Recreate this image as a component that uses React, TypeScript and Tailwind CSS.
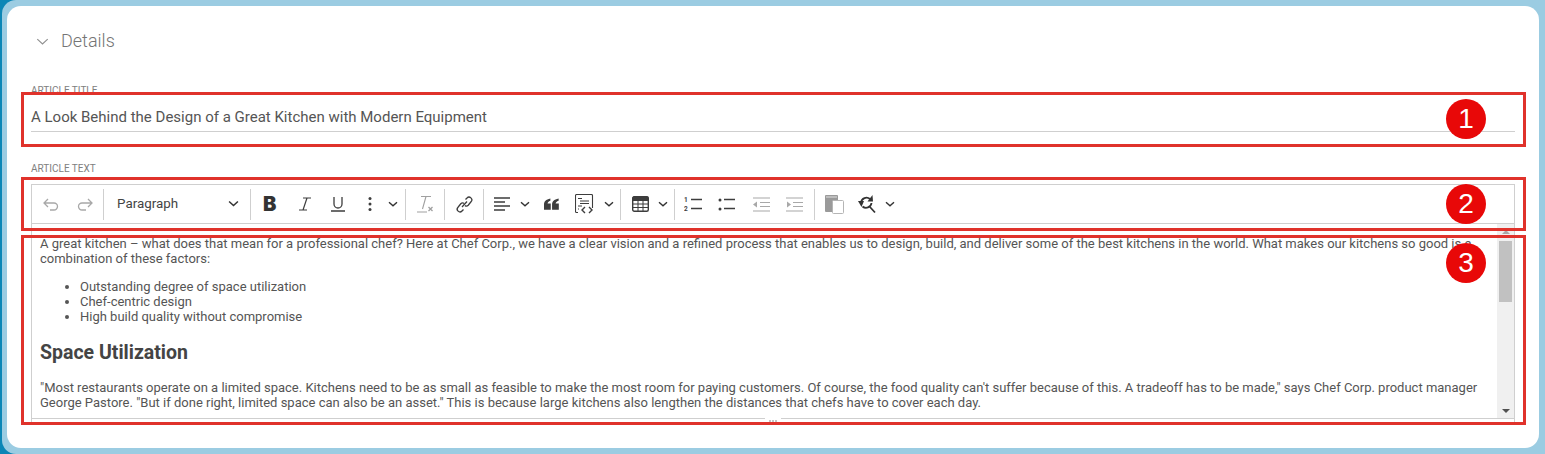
import React from "react";

const C = "#3d3d3d";

function Chev({ w = 10, c = "#333", s = 1.4 }: { w?: number; c?: string; s?: number }) {
  return (
    <svg width={w} height={w} viewBox="0 0 10 10" fill="none" stroke={c} strokeWidth={s}>
      <path d="M1 3.2 5 6.800l4-3.600" />
    </svg>
  );
}
const Sep = () => <div className="w-px h-[31px] bg-[#cfcfcf] shrink-0" />;

function Undo({ flip }: { flip?: boolean }) {
  return (
    <svg width="16" height="13" viewBox="0 0 16 13" fill="none" stroke="#a8a8a8" strokeWidth="1.3" style={flip ? { transform: "scaleX(-1)" } : undefined}>
      <path d="M5 1 1 5l4 4M1 5h10a3.500 3.500 0 0 1 0 7H7" />
    </svg>
  );
}

function Toolbar() {
  return (
    <div className="flex items-center h-[40px] border border-[#cfcfcf] pl-[11px] text-[#444]">
      <div className="flex items-center w-[60px] gap-[18px] shrink-0"><Undo /><Undo flip /></div>
      <Sep />
      <div className="flex items-center justify-between w-[146px] pl-[13px] pr-[11px] text-[13.4px] shrink-0">
        <span>Paragraph</span><Chev w={11} />
      </div>
      <Sep />
      <div className="flex items-center w-[154px] pl-[12px] shrink-0">
        <span className="w-[36px] font-['Inter'] font-black text-[20px] leading-none text-[#333]">B</span>
        <span className="w-[32px] flex">
          <svg width="12" height="14" viewBox="0 0 12 14" stroke={C} strokeWidth="1.2" fill="none"><path d="M4 1h8M0 13h8M8 1 4 13" /></svg>
        </span>
        <span className="w-[36px] flex">
          <svg width="14" height="16" viewBox="0 0 14 16" stroke={C} strokeWidth="1.3" fill="none"><path d="M3 1v7a4 4 0 0 0 8 0V1M0 15h14" /></svg>
        </span>
        <span className="w-[21px] flex">
          <svg width="6" height="16" viewBox="0 0 6 16" fill={C}><circle cx="3" cy="2.500" r="1.500" /><circle cx="3" cy="8" r="1.500" /><circle cx="3" cy="13.500" r="1.500" /></svg>
        </span>
        <Chev />
      </div>
      <Sep />
      <div className="flex items-center justify-center w-[38px] shrink-0">
        <svg width="17" height="18" viewBox="0 0 17 18" fill="none" stroke="#a0a0a0" strokeWidth="1.100"><path d="M0 17h10M4 1.500h10M9 1.500 5.500 14" /><path d="M11.500 12l4 4M15.500 12l-4 4" strokeWidth="1.300" /></svg>
      </div>
      <Sep />
      <div className="flex items-center justify-center w-[38px] shrink-0">
        <svg width="17" height="17" viewBox="0 0 17 17" fill="none" stroke={C} strokeWidth="1.300"><path d="M6 11l5-5.500M9.500 3.500 11 2a2.700 2.700 0 0 1 4 3.800l-2.800 3.400a2.500 2.500 0 0 1-3.200.4M7.500 13.500 6 15a2.700 2.700 0 0 1-4-3.800l2.800-3.400a2.500 2.500 0 0 1 3.200-.4" /></svg>
      </div>
      <Sep />
      <div className="flex items-center w-[136px] pl-[10px] shrink-0">
        <span className="w-[26px] flex">
          <svg width="16" height="16" viewBox="0 0 16 16" stroke={C} strokeWidth="1.300" fill="none"><path d="M0 2h16M0 6h11M0 10h16M0 14h11" /></svg>
        </span>
        <span className="w-[24px] flex"><Chev /></span>
        <span className="w-[31px] flex">
          <svg width="15" height="12" viewBox="0 0 16 12" fill={C}><path d="M0 12V6.500C0 3 2 1 6.800 0v2.400C4.800 3 3.900 4 3.800 5.500h3.400V12zM8.600 12V6.500C8.600 3 10.600 1 15.600 0v2.400c-2.200.6-3 1.600-3.200 3.100h3.400V12z" /></svg>
        </span>
        <span className="w-[29px] flex">
          <svg width="19" height="20" viewBox="0 0 19 20" fill="none" stroke={C} strokeWidth="1.100"><path d="M3 18.500H1.500a1 1 0 0 1-1-1V1.500a1 1 0 0 1 1-1h15a1 1 0 0 1 1 1V14" /><path d="M3 4.500h4M5 7h9M5 9.500h9M3 12h4M3 15h1" strokeWidth="1" /><path d="M10 13l-3 3 3 3M14 13l3 3-3 3" strokeWidth="1.400" /></svg>
        </span>
        <Chev />
      </div>
      <Sep />
      <div className="flex items-center w-[53px] pl-[11px] shrink-0">
        <span className="w-[26px] flex">
          <svg width="17" height="16" viewBox="0 0 17 16" fill="none" stroke={C}><rect x="0.700" y="0.700" width="15.600" height="14.600" rx="1.500" strokeWidth="1.400" /><path d="M1 1h15v3.500H1z" fill={C} /><path d="M1 8h15M1 11.500h15M6 4v11M11 4v11" strokeWidth="1" /></svg>
        </span>
        <Chev />
      </div>
      <Sep />
      <div className="flex items-center w-[139px] pl-[9px] shrink-0">
        <span className="w-[34px] flex">
          <svg width="18" height="17" viewBox="0 0 18 17" fill="none" stroke={C} strokeWidth="1.400">
            <text x="0" y="6" fontSize="6.500" fill={C} stroke="none" fontFamily="Roboto" fontWeight="700">1</text>
            <text x="0" y="15" fontSize="6.500" fill={C} stroke="none" fontFamily="Roboto" fontWeight="700">2</text>
            <path d="M7 3.500h11M7 12.500h11" />
          </svg>
        </span>
        <span className="w-[34px] flex">
          <svg width="18" height="17" viewBox="0 0 18 17" fill={C} stroke={C} strokeWidth="1.400">
            <circle cx="2" cy="4" r="1.500" stroke="none" /><circle cx="2" cy="13" r="1.500" stroke="none" />
            <path d="M6 3.500h11M6 12.500h11" />
          </svg>
        </span>
        <span className="w-[34px] flex">
          <svg width="18" height="17" viewBox="0 0 18 17" fill="#a8a8a8" stroke="#a8a8a8" strokeWidth="1.200">
            <path d="M1 2h17M8 6.500h10M8 10.500h10M1 15h17" /><path d="M5 5.500 1 8.500l4 3z" stroke="none" />
          </svg>
        </span>
        <svg width="18" height="17" viewBox="0 0 18 17" fill="#a8a8a8" stroke="#a8a8a8" strokeWidth="1.200">
          <path d="M0 2h17M7 6.500h10M7 10.500h10M0 15h17" /><path d="M1 5.500l4 3-4 3z" stroke="none" />
        </svg>
      </div>
      <Sep />
      <div className="flex items-center pl-[10px] shrink-0">
        <span className="w-[33px] flex">
          <svg width="19" height="19" viewBox="0 0 19 19"><rect x="0" y="0" width="13" height="17" rx="1" fill="#9a9a9a" /><rect x="1" y="1" width="11" height="2" fill="#bdbdbd" /><rect x="7.500" y="5.500" width="11" height="13" rx="1" fill="#fff" stroke="#b5b5b5" /></svg>
        </span>
        <span className="w-[27px] flex">
          <svg width="20" height="20" viewBox="0 0 20 20" fill="none" stroke="#333" strokeWidth="1.800">
            <path d="M3 8.500a5.500 5.500 0 0 1 9-3.500M13.500 9a5.500 5.500 0 0 1-9 3.500M11.500 12.500 17 18.500" />
            <path d="M9.500 7.500 15 7.500 14.500 1z" fill="#333" stroke="none" /><path d="M0 7h6l-2.500 6z" fill="#333" stroke="none" />
          </svg>
        </span>
        <Chev />
      </div>
    </div>
  );
}

function Editor() {
  return (
    <div className="relative h-[199px] border-x border-b border-[#cfcfcf] text-[13px] leading-[15px] text-[#555]">
      <div className="flex h-[195px] border-b border-[#cfcfcf] overflow-hidden">
        <div className="flex-1 pl-[8px] pr-[19px] pt-[12px]">
          <p>A great kitchen – what does that mean for a professional chef? Here at Chef Corp., we have a clear vision and a refined process that enables us to design, build, and deliver some of the best kitchens in the world. What makes our kitchens so good is a combination of these factors:</p>
          <ul className="list-disc pl-[40px] mt-[13px]">
            <li>Outstanding degree of space utilization</li>
            <li>Chef-centric design</li>
            <li>High build quality without compromise</li>
          </ul>
          <h2 className="text-[19.500px] leading-[22px] font-bold text-[#444] mt-[18px]">Space Utilization</h2>
          <p className="mt-[16px]">"Most restaurants operate on a limited space. Kitchens need to be as small as feasible to make the most room for paying customers. Of course, the food quality can't suffer because of this. A tradeoff has to be made," says Chef Corp. product manager George Pastore. "But if done right, limited space can also be an asset." This is because large kitchens also lengthen the distances that chefs have to cover each day.</p>
        </div>
        <div className="w-[17px] bg-[#f0f0f0] flex flex-col items-center justify-between shrink-0">
          <div className="flex flex-col items-center w-full">
            <div className="mt-[6px] w-0 h-0 border-x-[4px] border-x-transparent border-b-[4px] border-b-[#a8a8a8]" />
            <div className="mt-[7px] w-[13px] h-[61px] bg-[#c1c1c1]" />
          </div>
          <div className="mb-[5px] w-0 h-0 border-x-[4px] border-x-transparent border-t-[4px] border-t-[#505050]" />
        </div>
      </div>
      <div className="absolute left-0 right-0 -bottom-px flex justify-center">
        <div className="w-[16px] h-[5px] bg-white flex items-center justify-center gap-px">
          <i className="w-[2px] h-[2px] bg-[#c4c4c4]" /><i className="w-[2px] h-[2px] bg-[#c4c4c4]" /><i className="w-[2px] h-[2px] bg-[#c4c4c4]" />
        </div>
      </div>
    </div>
  );
}

const Red = ({ cls }: { cls: string }) => <div className={`absolute border-[3px] border-[#e0322b] ${cls}`} />;
const Badge = ({ n, cls }: { n: number; cls: string }) => (
  <div className={`absolute w-[40px] h-[40px] rounded-full bg-[#e80808] text-white flex items-center justify-center font-['Liberation_Sans'] text-[28px] ${cls}`}>{n}</div>
);

export default function App() {
  return (
    <div className="w-[1545px] h-[454px] overflow-hidden bg-[#0b86b6] font-['Roboto',sans-serif]">
      <div className="h-full ml-[2px] bg-[#9bcce2] rounded-tl-[14px] rounded-bl-[14px] pt-[6px] pb-[6px] pl-[5px] pr-[6px]">
        <div className="relative h-[442px] bg-white rounded-[14px]">
          <div className="flex items-center pt-[24px] pl-[29px] gap-[12px] text-[#757575]">
            <Chev w={13} c="#8f8f8f" s={0.9} />
            <span className="text-[18px] leading-[22px] font-light">Details</span>
          </div>
          <div className="mx-[24px] mt-[33px]">
            <div className="text-[10px] leading-[12px] text-[#808080] h-[12px]">ARTICLE TITLE</div>
            <div className="h-[31px] pt-[3px] flex items-center border-b border-[#cfcfcf] text-[15px] text-[#555] mt-[4px]">
              A Look Behind the Design of a Great Kitchen with Modern Equipment
            </div>
            <div className="text-[10px] leading-[12px] text-[#808080] mt-[31px] mb-[9px]">ARTICLE TEXT</div>
            <Toolbar />
            <Editor />
          </div>
          <Red cls="left-[14px] top-[86px] w-[1505px] h-[55px]" />
          <Red cls="left-[14px] top-[171px] w-[1505px] h-[54px]" />
          <Red cls="left-[14px] top-[229px] w-[1505px] h-[190px]" />
          <Badge n={1} cls="left-[1439px] top-[93px]" />
          <Badge n={2} cls="left-[1439px] top-[178px]" />
          <Badge n={3} cls="left-[1439px] top-[237px]" />
        </div>
      </div>
    </div>
  );
}
